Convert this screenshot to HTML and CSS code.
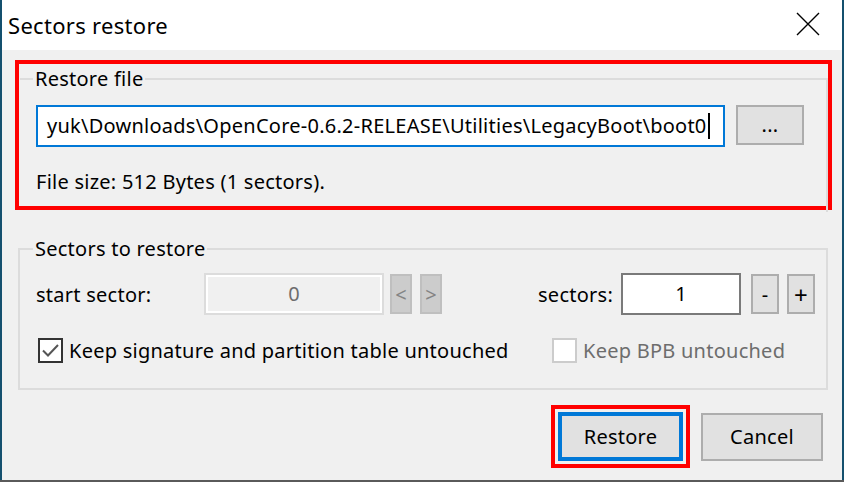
FILE: index.html
```html
<!DOCTYPE html>
<html lang="en">

<head>
  <meta charset="UTF-8" />
  <title>Sectors restore</title>
  <link rel="stylesheet" href="styles.css">
</head>

<body>
  <div class="window">
    <div class="titlebar">
      <span class="title">Sectors restore</span>
      <svg class="close" width="24" height="24" viewBox="0 0 24 24">
        <path d="M1 1 L23 23 M23 1 L1 23" stroke="#000" stroke-width="1.4" fill="none" />
      </svg>
    </div>

    <div class="content">
      <!-- restore file group (highlighted) -->
      <div class="mark mark-file">
        <fieldset class="group group-file">
          <legend>Restore file</legend>
          <div class="file-row">
            <div class="path-input">yuk\Downloads\OpenCore-0.6.2-RELEASE\Utilities\LegacyBoot\boot0<span class="caret"></span></div>
            <button class="btn btn-browse">...</button>
          </div>
          <div class="file-size">File size: 512 Bytes (1 sectors).</div>
        </fieldset>
      </div>

      <!-- sectors group -->
      <fieldset class="group group-sectors">
        <legend>Sectors to restore</legend>
        <div class="sector-row">
          <span class="lbl lbl-start">start sector:</span>
          <div class="num-input num-disabled">0</div>
          <button class="btn btn-small btn-disabled">&lt;</button>
          <button class="btn btn-small btn-disabled">&gt;</button>
          <span class="lbl lbl-count">sectors:</span>
          <div class="num-input num-count">1</div>
          <button class="btn btn-small btn-step">-</button>
          <button class="btn btn-small btn-step btn-plus">+</button>
        </div>
        <div class="check-row">
          <label class="check check-main">
            <span class="box box-checked">
              <svg width="19" height="19" viewBox="0 0 19 19">
                <path d="M2 9.5 L7 14.5 L17 4" stroke="#555" stroke-width="2" fill="none" />
              </svg>
            </span>
            Keep signature and partition table untouched
          </label>
          <label class="check check-disabled">
            <span class="box box-disabled"></span>
            Keep BPB untouched
          </label>
        </div>
      </fieldset>

      <div class="actions">
        <div class="mark mark-btn">
          <button class="btn btn-default">Restore</button>
        </div>
        <button class="btn btn-cancel">Cancel</button>
      </div>
    </div>
  </div>
</body>

</html>
```

FILE: styles.css
```css
* {
  box-sizing: border-box;
}

body {
  margin: 0;
  width: 844px;
  height: 482px;
  overflow: hidden;
  background: #5a5a5a;
  font-family: "Noto Sans", "DejaVu Sans", sans-serif;
  font-size: 20px;
  letter-spacing: 0.25px;
  color: #000;
}

.window {
  width: 844px;
  height: 480px;
  border-left: 2px solid #14506e;
  border-right: 2px solid #14506e;
  background: #f0f0f0;
  display: flex;
  flex-direction: column;
}

.titlebar {
  height: 50px;
  background: #fff;
  display: flex;
  align-items: center;
  justify-content: space-between;
  padding: 0 22px 0 6px;
}

.title {
  font-size: 22px;
  letter-spacing: 0.3px;
}

.close {
  margin-top: -2px;
}

.content {
  padding: 10px 10px 0 13px;
}

.mark {
  border: 4px solid #ff0000;
}

.mark-file {
  width: 817px;
  height: 150px;
  padding: 0 0 0 1px;
}

.group {
  margin: 0;
  border: 2px solid #dcdcdc;
  padding: 0;
  min-width: 0;
}

.group legend {
  margin-left: -3px;
  padding: 0 2px;
  line-height: 26px;
  height: 26px;
}

.group-file {
  height: 146px;
  width: 808px;
  margin-top: 2px;
  border-left: none;
  border-bottom: none;
  padding: 13px 0 0 16px;
}

.file-row {
  display: flex;
  align-items: flex-start;
}

.path-input {
  width: 689px;
  height: 42px;
  background: #fff;
  border: 2px solid #0078d7;
  padding: 0 0 0 9px;
  line-height: 37px;
  white-space: nowrap;
  overflow: hidden;
}

.caret {
  display: inline-block;
  width: 2px;
  height: 26px;
  background: #000;
  vertical-align: -6px;
  margin-left: 1px;
}

.btn {
  font-family: inherit;
  font-size: 20px;
  letter-spacing: 0.25px;
  background: #e1e1e1;
  border: 2px solid #adadad;
  color: #000;
  padding: 0;
}

.btn-browse {
  width: 68px;
  height: 40px;
  margin-left: 11px;
  line-height: 30px;
}

.file-size {
  margin-top: 22px;
  line-height: 26px;
}

.group-sectors {
  width: 810px;
  height: 154px;
  margin: 26px 0 0 3px;
  padding: 11px 0 0 16px;
}

.sector-row {
  display: flex;
  align-items: center;
  height: 42px;
}

.lbl-start {
  width: 168px;
}

.num-input {
  height: 42px;
  line-height: 38px;
  text-align: center;
}

.num-disabled {
  width: 180px;
  border: 2px solid #dcdcdc;
  box-shadow: inset 0 0 0 2px #fff;
  color: #6d6d6d;
}

.btn-small {
  width: 22px;
  height: 40px;
  margin-left: 6px;
}

.btn-disabled {
  background: #cccccc;
  border-color: #bfbfbf;
  color: #838383;
  margin-left: 6px;
}

.btn-disabled + .btn-disabled {
  margin-left: 8px;
}

.lbl-count {
  margin-left: auto;
  padding-right: 8px;
}

.num-count {
  width: 120px;
  background: #fff;
  border: 2px solid #7a7a7a;
}

.btn-step {
  width: 28px;
  margin-left: 10px;
}

.btn-step + .btn-step {
  margin-left: 8px;
}

.btn-plus {
  font-size: 24px;
  margin-right: 11px;
}

.check-row {
  display: flex;
  align-items: center;
  margin-top: 22px;
}

.check {
  display: flex;
  align-items: center;
  gap: 6px;
  white-space: nowrap;
}

.check-main {
  width: 516px;
}

.box {
  width: 25px;
  height: 25px;
  flex: none;
  display: flex;
  align-items: center;
  justify-content: center;
}

.box-checked {
  border: 2px solid #333;
  background: #fff;
  margin-left: 2px;
}

.check-disabled {
  color: #6d6d6d;
}

.box-disabled {
  border: 2px solid #ccc;
  background: #fff;
}

.actions {
  display: flex;
  justify-content: flex-end;
  align-items: center;
  margin-top: 15px;
  padding-right: 9px;
}

.mark-btn {
  width: 139px;
  height: 63px;
  padding: 3px;
  background: #f0f0f0;
}

.btn-default {
  width: 100%;
  height: 100%;
  border: 4px solid #0078d7;
}

.btn-cancel {
  width: 122px;
  height: 48px;
  margin-left: 11px;
}
```
